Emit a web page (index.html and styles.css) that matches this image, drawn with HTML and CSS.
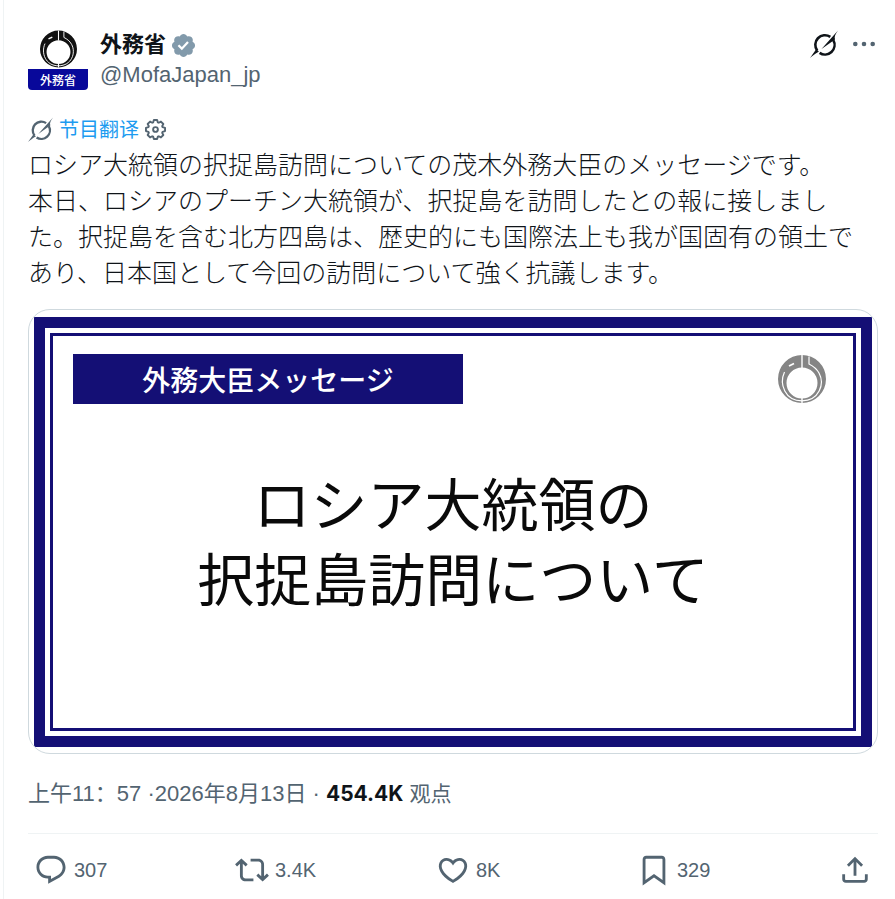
FILE: index.html
```
<!DOCTYPE html>
<html lang="ja">
<head>
    <meta charset="UTF-8">
    <meta name="viewport" content="width=device-width, initial-scale=1.0">
    <title>外務省 @MofaJapan_jp</title>
    <link rel="stylesheet" href="styles.css">
</head>
<body>
    <!-- Shared icons -->
    <svg class="sprite" aria-hidden="true">
        <symbol id="emblem" viewBox="0 0 48 48">
            <path fill="currentColor" fill-rule="evenodd" d="M24 0a24 24 0 1 0 0 48a24 24 0 1 0 0-48zM24 12.5a15.500 15.500 0 1 1 0 31a15.500 15.500 0 1 1 0-31z"/>
            <g fill="none" stroke="#fff">
                <path stroke-width="1.4" d="M24 0v13M24 43v5"/>
                <path stroke-width="1.2" d="M6.500 17C1 29 7 45.800 24 45.800C41 45.800 47 29 41 18C38.500 13.500 35 11 31 9V1.500"/>
                <path stroke-width="1.800" d="M11 11l5-2.500"/>
            </g>
        </symbol>
        <symbol id="grok" viewBox="0 0 28 28">
            <path fill="none" stroke="currentColor" stroke-width="2.600" d="M7.300 20.700A9.600 9.600 0 0 1 20.300 6.900M9.600 22.900A9.600 9.600 0 0 0 23.300 10.200"/>
            <path fill="currentColor" d="M28 .500L11.500 19L22.500 11.200L25 9.500C24 6.500 25.500 4 28 .500zM0 28L6 19.500L9 21.500C7.500 22.500 6 23 0 28z"/>
        </symbol>
    </svg>

    <article class="post">
        <!-- Author -->
        <header class="post-header">
            <a class="avatar" href="#profile" aria-label="外務省">
                <svg class="avatar-emblem"><use href="#emblem"/></svg>
                <span class="avatar-name">外務省</span>
            </a>
            <div class="author">
                <div class="author-name">
                    <a href="#profile">外務省</a>
                    <svg class="badge" viewBox="0 0 24 24"><path fill="currentColor" d="M22.250 12c0-1.430-.880-2.670-2.190-3.340.460-1.390.200-2.900-.810-3.910s-2.520-1.270-3.910-.810c-.660-1.310-1.910-2.190-3.340-2.190s-2.670.880-3.330 2.190c-1.400-.460-2.910-.200-3.920.810s-1.260 2.520-.800 3.910c-1.310.670-2.200 1.910-2.200 3.340s.890 2.670 2.200 3.340c-.460 1.390-.210 2.900.800 3.910s2.520 1.260 3.910.810c.670 1.310 1.910 2.190 3.340 2.190s2.680-.880 3.340-2.190c1.390.450 2.900.200 3.910-.810s1.270-2.520.810-3.910c1.310-.670 2.190-1.910 2.190-3.340z"/><path fill="none" stroke="#fff" stroke-width="2" d="M7.500 11.800l3 3 5.500-6"/></svg>
                </div>
                <a class="handle" href="#profile">@MofaJapan_jp</a>
            </div>
            <div class="header-actions">
                <button class="icon-btn grok-btn" aria-label="Grok"><svg><use href="#grok"/></svg></button>
                <button class="icon-btn more-btn" aria-label="More"><svg viewBox="0 0 24 8"><path fill="currentColor" d="M1 4a2.300 2.300 0 1 0 4.600 0a2.300 2.300 0 1 0-4.600 0zM9.700 4a2.300 2.300 0 1 0 4.600 0a2.300 2.300 0 1 0-4.600 0zM18.400 4a2.300 2.300 0 1 0 4.600 0a2.300 2.300 0 1 0-4.600 0z"/></svg></button>
            </div>
        </header>

        <!-- Translation -->
        <div class="translate" lang="zh-CN">
            <svg class="translate-icon"><use href="#grok"/></svg>
            <a href="#translate">节目翻译</a>
            <button class="icon-btn gear-btn" aria-label="设置">
                <svg viewBox="1 1 22 22" fill="none" stroke="currentColor" stroke-width="2"><path d="M10.300 2h3.400l.700 2.500 1 .400 2.300-1.200 2.500 2.500-1.200 2.300.400 1 2.600.800v3.400l-2.600.800-.400 1 1.200 2.300-2.500 2.500-2.300-1.200-1 .400-.700 2.500h-3.400l-.700-2.500-1-.400-2.300 1.200-2.500-2.500L5 15.500l-.400-1L2 13.700v-3.400l2.600-.800.400-1-1.200-2.300 2.500-2.500 2.300 1.200 1-.400z" stroke-linejoin="round"/><circle cx="12" cy="12" r="2.500"/></svg>
            </button>
        </div>

        <p class="post-text">ロシア大統領の択捉島訪問についての茂木外務大臣のメッセージです。<br>
本日、ロシアのプーチン大統領が、択捉島を訪問したとの報に接しまし<br>
た。択捉島を含む北方四島は、歴史的にも国際法上も我が国固有の領土で<br>
あり、日本国として今回の訪問について強く抗議します。</p>

        <!-- Message card -->
        <div class="media">
            <div class="frame">
                <div class="frame-inner">
                    <div class="card-top">
                        <span class="card-label">外務大臣メッセージ</span>
                        <svg class="card-emblem"><use href="#emblem"/></svg>
                    </div>
                    <h2 class="card-title">ロシア大統領の<br>択捉島訪問について</h2>
                </div>
            </div>
        </div>

        <p class="meta" lang="zh-CN"><time datetime="2026-08-13T11:57">上午11：57 ·2026年8月13日</time> · <strong>454.4K</strong> <span class="views">观点</span></p>

        <!-- Actions -->
        <div class="actions">
            <button class="action">
                <svg viewBox="0 0 24 24"><path d="M1.751 10c0-4.420 3.584-8 8.005-8h4.366c4.490 0 8.129 3.640 8.129 8.130 0 2.960-1.607 5.680-4.196 7.110l-8.054 4.460v-3.690h-.067c-4.490.100-8.183-3.510-8.183-8.010zm8.005-6c-3.317 0-6.005 2.690-6.005 6 0 3.370 2.770 6.080 6.138 6.010l.351-.010h1.761v2.300l5.087-2.810c1.951-1.080 3.163-3.130 3.163-5.360 0-3.390-2.744-6.130-6.129-6.130H9.756z"/></svg>
                <span>307</span>
            </button>
            <button class="action">
                <svg viewBox="0 0 24 24"><path d="M4.500 3.880l4.432 4.140-1.364 1.460L5.500 7.550V16c0 1.100.896 2 2 2H13v2H7.500c-2.209 0-4-1.790-4-4V7.550L1.432 9.480.068 8.020 4.500 3.880zM16.500 6H11V4h5.500c2.209 0 4 1.790 4 4v8.450l2.068-1.930 1.364 1.460-4.432 4.140-4.432-4.140 1.364-1.460 2.068 1.930V8c0-1.100-.896-2-2-2z"/></svg>
                <span>3.4K</span>
            </button>
            <button class="action">
                <svg viewBox="0 0 24 24"><path d="M16.697 5.500c-1.222-.060-2.679.510-3.890 2.160l-.805 1.090-.806-1.090C9.984 6.010 8.526 5.440 7.304 5.500c-1.243.070-2.349.780-2.910 1.910-.552 1.120-.633 2.780.479 4.820 1.074 1.970 3.257 4.270 7.129 6.610 3.870-2.340 6.052-4.640 7.126-6.610 1.111-2.040 1.030-3.700.477-4.820-.561-1.130-1.666-1.840-2.908-1.910zm4.187 7.690c-1.351 2.480-4.001 5.120-8.379 7.670l-.503.300-.504-.300c-4.379-2.550-7.029-5.190-8.382-7.670-1.360-2.500-1.410-4.860-.514-6.670.887-1.790 2.647-2.910 4.601-3.010 1.651-.090 3.368.560 4.798 2.010 1.429-1.450 3.146-2.100 4.796-2.010 1.954.100 3.714 1.220 4.601 3.010.896 1.810.846 4.170-.514 6.670z"/></svg>
                <span>8K</span>
            </button>
            <button class="action">
                <svg viewBox="0 0 24 24"><path d="M4 4.500C4 3.120 5.119 2 6.500 2h11C18.881 2 20 3.120 20 4.500v18.440l-8-5.710-8 5.710V4.500zM6.500 4c-.276 0-.500.220-.500.500v14.560l6-4.290 6 4.290V4.500c0-.280-.224-.500-.500-.500h-11z"/></svg>
                <span>329</span>
            </button>
            <button class="action share" aria-label="Share">
                <svg viewBox="0 0 24 24"><path d="M12 2.590l5.700 5.700-1.410 1.420L13 6.410V16h-2V6.410l-3.300 3.300-1.410-1.420L12 2.590zM21 15l-.020 3.510c0 1.380-1.120 2.490-2.500 2.490H5.500C4.110 21 3 19.880 3 18.500V15h2v3.500c0 .280.220.500.500.500h12.980c.280 0 .500-.220.500-.500L19 15h2z"/></svg>
            </button>
        </div>
    </article>
</body>
</html>
```
FILE: styles.css
```
* {
    margin: 0;
    padding: 0;
    box-sizing: border-box;
}

body {
    background-color: #fff;
    color: #0f1419;
    font-family: "Liberation Sans", "Noto Sans CJK JP", sans-serif;
}

a {
    color: inherit;
    text-decoration: none;
}

button {
    background: none;
    border: none;
    color: inherit;
    font: inherit;
    cursor: pointer;
}

svg {
    display: block;
}

.sprite {
    position: absolute;
    width: 0;
    height: 0;
}

.post {
    margin-left: 3px;
    padding: 30px 17px 12px 24px;
    border-left: 1px solid #eff3f4;
    min-height: 100vh;
}

/* Author */
.post-header {
    display: flex;
    gap: 12px;
}

.avatar {
    width: 60px;
    height: 60px;
    border-radius: 4px;
    overflow: hidden;
    display: flex;
    flex-direction: column;
    align-items: center;
    justify-content: space-between;
    color: #111;
}

.avatar-emblem {
    width: 37px;
    height: 38px;
}

.avatar-name {
    width: 100%;
    background-color: #08089a;
    color: #fff;
    font-family: "Noto Sans CJK JP", sans-serif;
    font-size: 12px;
    font-weight: 500;
    line-height: 21px;
    text-align: center;
}

.author {
    flex: 1;
}

.author-name {
    display: flex;
    align-items: center;
    gap: 4px;
    font-size: 22px;
    font-weight: bold;
    line-height: 30px;
}

.badge {
    width: 27px;
    height: 27px;
    color: #829aab;
}

.handle {
    display: block;
    color: #536471;
    font-size: 22px;
    line-height: 30px;
}

.header-actions {
    display: flex;
    align-items: center;
    gap: 14px;
    height: 28px;
    padding-right: 2px;
}

.grok-btn svg {
    width: 28px;
    height: 28px;
}

.more-btn {
    color: #536471;
}

.more-btn svg {
    width: 24px;
    height: 8px;
}

/* Translation */
.translate {
    display: flex;
    align-items: center;
    gap: 6px;
    margin: 26px 0 3px;
    height: 26px;
    color: #536471;
    font-family: "Noto Sans CJK SC", sans-serif;
    font-size: 20px;
    line-height: 26px;
}

.translate a {
    color: #1d9bf0;
}

.translate-icon {
    width: 25px;
    height: 25px;
}

.gear-btn svg {
    width: 21px;
    height: 21px;
}

.post-text {
    font-family: "Noto Sans CJK JP", sans-serif;
    font-size: 25px;
    font-weight: 300;
    line-height: 36px;
}

/* Message card */
.media {
    margin-top: 20px;
    padding: 7px 5px 6px;
    border: 1px solid #cfd9de;
    border-radius: 22px;
    overflow: hidden;
}

.frame {
    padding: 5px;
    border: 11px solid #140f75;
}

.frame-inner {
    padding: 18px 20px 114px;
    border: 3px solid #140f75;
}

.card-top {
    display: flex;
    align-items: center;
    justify-content: space-between;
    padding-right: 7px;
}

.card-label {
    width: 390px;
    background-color: #140f75;
    color: #fff;
    font-family: "Noto Sans CJK JP", sans-serif;
    font-size: 28px;
    font-weight: 500;
    line-height: 50px;
    text-align: center;
}

.card-emblem {
    width: 48px;
    height: 48px;
    color: #858585;
}

.card-title {
    margin-top: 60px;
    color: #0a0a0a;
    font-family: "Noto Sans CJK JP", sans-serif;
    font-size: 57px;
    font-weight: normal;
    line-height: 75px;
    text-align: center;
}

/* Date and views */
.meta {
    padding: 24px 0;
    border-bottom: 1px solid #eff3f4;
    color: #536471;
    font-family: "Liberation Sans", "Noto Sans CJK SC", sans-serif;
    font-size: 22px;
    line-height: 31px;
}

.meta strong {
    color: #0f1419;
    font-family: Inter, sans-serif;
    font-size: 21px;
    font-weight: bold;
}

.views {
    font-size: 21px;
}

/* Actions */
.actions {
    display: flex;
    padding: 19px 6px 0;
    color: #536471;
}

.action {
    flex: 1;
    display: flex;
    align-items: center;
    gap: 6px;
    font-size: 20px;
}

.action svg {
    width: 34px;
    height: 34px;
    fill: currentColor;
}

.share {
    flex: none;
}
```
